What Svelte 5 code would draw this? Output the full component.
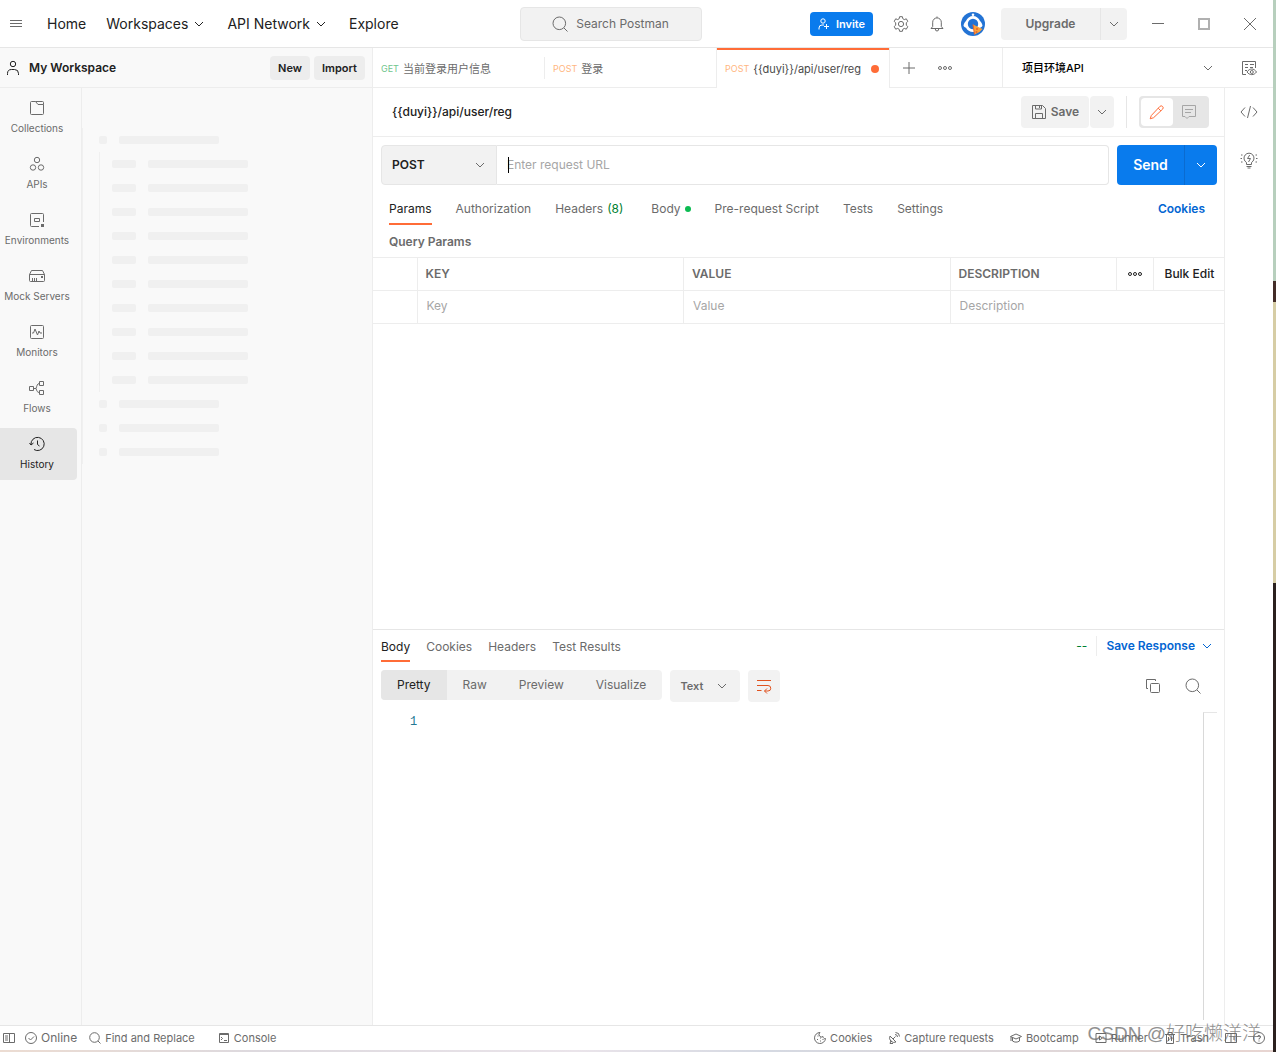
<script>
  const requestUrl = '{{duyi}}/api/user/reg';

  const sections = ['Collections', 'APIs', 'Environments', 'Mock Servers', 'Monitors', 'Flows', 'History'];
  const requestTabs = [
    { label: 'Params' },
    { label: 'Authorization' },
    { label: 'Headers', count: '(8)' },
    { label: 'Body', dot: true },
    { label: 'Pre-request Script' },
    { label: 'Tests' },
    { label: 'Settings' }
  ];
  const responseTabs = ['Body', 'Cookies', 'Headers', 'Test Results'];
  const views = ['Pretty', 'Raw', 'Preview', 'Visualize'];
  const nested = Array.from({ length: 10 });
  const trailing = Array.from({ length: 3 });

  let section = 'History';
  let requestTab = 'Params';
  let responseTab = 'Body';
  let view = 'Pretty';
  let url = '';
</script>

<div class="app">
  <header>
    <nav class="main-nav">
      <button class="menu" aria-label="Menu">
        <svg width="12" height="9" viewBox="0 0 12 9"><path d="M0 1.500h12M0 4.500h12M0 7.500h12" /></svg>
      </button>
      <a href="#home">Home</a>
      <a href="#workspaces">Workspaces
        <svg class="chevron" viewBox="0 0 16 16"><path d="M4 6l4 4 4-4" /></svg>
      </a>
      <a href="#network">API Network
        <svg class="chevron" viewBox="0 0 16 16"><path d="M4 6l4 4 4-4" /></svg>
      </a>
      <a href="#explore">Explore</a>
    </nav>

    <button class="search">
      <svg width="16" height="16" viewBox="0 0 16 16"><circle cx="7.3" cy="7.3" r="6.3" /><path d="M12 12l3.5 3.5" /></svg>
      Search Postman
    </button>

    <div class="account">
      <button class="invite">
        <svg width="12" height="12" viewBox="0 0 12 12"><circle cx="5" cy="3" r="2.2" /><path d="M1 11.5V10a3 3 0 0 1 3-3h2M8.5 6v5M6 8.5h5" /></svg>
        Invite
      </button>
      <button class="plain" aria-label="Settings">
        <svg width="16" height="16" viewBox="0 0 16 16"><circle cx="8" cy="8" r="2.6" /><path d="M6.6 .7h2.8l.4 2 1.5.9 2-.8 1.5 2.6-1.5 1.4v2.4l1.5 1.4-1.5 2.6-2-.8-1.5.9-.4 2H6.6l-.4-2-1.5-.9-2 .8-1.5-2.6 1.5-1.4V6.8L1.2 5.4l1.5-2.6 2 .8 1.5-.9z" /></svg>
      </button>
      <button class="plain bell" aria-label="Notifications">
        <svg width="16" height="16" viewBox="0 0 16 16"><path d="M8 .5v1.3M3.7 10.5V6.200a4.300 4.300 0 0 1 8.600 0v4.300l1.700 2H2zM6.300 13a1.700 2 0 0 0 3.400 0" /></svg>
      </button>
      <button class="plain" aria-label="Profile">
        <svg class="avatar" width="24" height="24" viewBox="0 0 24 24">
          <circle cx="12" cy="12" r="12" fill="#2373d4" />
          <path d="M2.500 13.500C3 11 4 10 5 9c1-3 4-5 7-5s6 2 7 5c1 1 2 2 2.500 4.500-.5 1.500-1.500 2-2.500 2.300-1 2.700-4 4.200-7 4.200s-6-1.500-7-4.200c-1-.3-2-.8-2.500-2.300z" fill="#fff" />
          <circle cx="12" cy="12" r="5.200" fill="#2373d4" />
          <circle cx="12" cy="2.700" r="1.300" fill="#fff" />
          <path d="M12 12.500l9.500 4.500-3 3-5 2.500z" fill="#f9a23b" />
          <path d="M12 12.500l1.500 10" stroke="#e8642c" />
          <circle cx="16" cy="17" r="1" fill="#e8642c" />
          <circle cx="15.500" cy="20" r="1" fill="#e8642c" />
        </svg>
      </button>
      <div class="upgrade">
        <button>Upgrade</button>
        <button class="more" aria-label="Upgrade options">
          <svg class="chevron" viewBox="0 0 16 16"><path d="M4 6l4 4 4-4" /></svg>
        </button>
      </div>
      <div class="window-controls">
        <button aria-label="Minimize"><svg width="12" height="12" viewBox="0 0 12 12"><path d="M0 5.500h12" /></svg></button>
        <button class="maximize" aria-label="Maximize"><svg width="12" height="12" viewBox="0 0 12 12"><path d="M1 1h10v10H1z" stroke-width="2" /></svg></button>
        <button aria-label="Close"><svg width="12" height="12" viewBox="0 0 12 12"><path d="M0 0l12 12M12 0L0 12" /></svg></button>
      </div>
    </div>
  </header>

  <div class="content">
    <aside>
      <div class="workspace">
        <svg width="14" height="16" viewBox="0 0 14 16"><circle cx="7" cy="4" r="2.700" /><path d="M1.500 15v-1.500A4 4 0 0 1 5.500 9.500h3a4 4 0 0 1 4 4V15" /></svg>
        <h1>My Workspace</h1>
        <button>New</button>
        <button>Import</button>
      </div>
      <div class="explorer">
        <nav class="sections">
          {#each sections as name}
            <button class:active={section === name} on:click={() => (section = name)}>
              <svg width="16" height="16" viewBox="0 0 16 16">
                {#if name === 'Collections'}
                  <path d="M1.500 2.500a1 1 0 0 1 1-1h4l2.500 3h5.500v9a1 1 0 0 1-1 1h-11a1 1 0 0 1-1-1zM6.500 1.500h7a1 1 0 0 1 1 1v2" />
                {:else if name === 'APIs'}
                  <circle cx="8" cy="4" r="2.700" /><circle cx="4" cy="11.500" r="2.700" /><circle cx="12" cy="11.500" r="2.700" />
                {:else if name === 'Environments'}
                  <path d="M10 14.500H2.500a1 1 0 0 1-1-1v-11a1 1 0 0 1 1-1h11a1 1 0 0 1 1 1V10M5.500 6.500h5v3h-5z" /><path class="solid" d="M12 12h3v3h-3z" />
                {:else if name === 'Mock Servers'}
                  <path d="M.500 6.500h15v6a1 1 0 0 1-1 1h-13a1 1 0 0 1-1-1zM.500 6.500l2-4h11l2 4M3.500 10v3M5.500 10v3M7.500 10v3" /><path class="solid" d="M12 8h2v2h-2z" />
                {:else if name === 'Monitors'}
                  <rect x="1.500" y="1.500" width="13" height="13" rx="1" /><path d="M3 9h1.500L6 5l2.500 6L10 7l1 2h2" />
                {:else if name === 'Flows'}
                  <path d="M.500 6.500h4v4h-4zM10.500 1.500h4v4h-4zM10.500 10.500h4v4h-4zM4.500 8.500H7M10.500 3.500C8 3.500 8 6 7 8.500c1 2.500 1 4 3.500 4" />
                {:else}
                  <path d="M2 8.500a6.600 6.600 0 1 1 3 5M.500 7L2 9l2.500-2M8.500 4.500v4l2 1.500" />
                {/if}
              </svg>
              {name}
            </button>
          {/each}
        </nav>
        <div class="skeleton" aria-hidden="true">
          <div class="row"><i class="dot"></i><i class="bar"></i></div>
          <div class="nested">
            {#each nested as _}
              <div class="row"><i class="tag"></i><i class="bar"></i></div>
            {/each}
          </div>
          {#each trailing as _}
            <div class="row"><i class="dot"></i><i class="bar"></i></div>
          {/each}
        </div>
      </div>
    </aside>

    <div class="workbench">
      <div class="tab-bar">
        <button class="tab divided"><span class="get">GET</span>当前登录用户信息</button>
        <button class="tab"><span class="post">POST</span>登录</button>
        <button class="tab open"><span class="post">POST</span>{requestUrl}<i class="unsaved"></i></button>
        <div class="tab-tools">
          <button class="plain" aria-label="New tab"><svg width="12" height="12" viewBox="0 0 12 12"><path d="M6 0v12M0 6h12" /></svg></button>
          <button class="plain" aria-label="Tab options">
            <svg width="14" height="6" viewBox="0 0 14 6"><circle cx="2" cy="3" r="1.500" /><circle cx="7" cy="3" r="1.500" /><circle cx="12" cy="3" r="1.500" /></svg>
          </button>
        </div>
        <div class="picker environment">
          <select aria-label="Environment"><option>项目环境API</option></select>
          <svg class="chevron" viewBox="0 0 16 16"><path d="M4 6l4 4 4-4" /></svg>
        </div>
        <button class="plain quick-look" aria-label="Environment quick look">
          <svg width="16" height="16" viewBox="0 0 16 16"><path d="M5 14.500H1.500v-13h13V8M4 4.500h3M4 7.500h3M4 10.500h2M9 4.500h4M9 7.500h3M6 12c2.500-4 7-4 9.500 0-2.500 3.500-7 3.500-9.500 0z" /><circle cx="10.800" cy="12" r="1.500" /></svg>
        </button>
      </div>

      <div class="columns">
        <main>
          <div class="request-title">
            <h2>{requestUrl}</h2>
            <div class="save">
              <button>
                <svg width="16" height="16" viewBox="0 0 16 16"><path d="M1.500 1.500h10l3 3v10h-13zM4.500 1.500v3.500h6V1.500M8.500 2v2M4.500 14.500v-5h7v5" /></svg>
                Save
              </button>
              <button class="more" aria-label="Save options">
                <svg class="chevron" viewBox="0 0 16 16"><path d="M4 6l4 4 4-4" /></svg>
              </button>
            </div>
            <div class="mode">
              <button class="on" aria-label="Build">
                <svg width="16" height="16" viewBox="0 0 16 16"><path d="M1.200 14.800L2.300 11.500 10.800 2.500a1.900 1.900 0 0 1 2.800 2.700L4.600 13.700zM9.200 4.200l2.700 2.700" /></svg>
              </button>
              <button aria-label="Comments">
                <svg width="16" height="16" viewBox="0 0 16 16"><path d="M1.500 1.500h13v11H8l-2 2-2-2H1.500zM4 5.500h8M4 8.500h6" /></svg>
              </button>
            </div>
          </div>

          <div class="request-line">
            <div class="picker method">
              <select aria-label="Method"><option>POST</option></select>
              <svg class="chevron" viewBox="0 0 16 16"><path d="M4 6l4 4 4-4" /></svg>
            </div>
            <div class="url">
              <i class="caret"></i>
              <input type="text" aria-label="Request URL" placeholder="Enter request URL" bind:value={url} />
            </div>
            <div class="send">
              <button>Send</button>
              <button class="more" aria-label="Send options">
                <svg class="chevron" viewBox="0 0 16 16"><path d="M4 6l4 4 4-4" /></svg>
              </button>
            </div>
          </div>

          <div class="request-tabs">
            {#each requestTabs as tab}
              <button class="link-tab" class:active={requestTab === tab.label} on:click={() => (requestTab = tab.label)}>
                {tab.label}
                {#if tab.count}<span class="count">{tab.count}</span>{/if}
                {#if tab.dot}<i class="has-body"></i>{/if}
              </button>
            {/each}
            <a class="blue" href="#cookies">Cookies</a>
          </div>

          <h3>Query Params</h3>
          <table>
            <thead>
              <tr>
                <th class="check"></th>
                <th>KEY</th>
                <th>VALUE</th>
                <th class="description">DESCRIPTION</th>
                <th class="options">
                  <button class="plain" aria-label="Columns">
                    <svg width="14" height="6" viewBox="0 0 14 6"><circle cx="2" cy="3" r="1.500" /><circle cx="7" cy="3" r="1.500" /><circle cx="12" cy="3" r="1.500" /></svg>
                  </button>
                </th>
                <th class="bulk"><button class="plain">Bulk Edit</button></th>
              </tr>
            </thead>
            <tbody>
              <tr>
                <td></td>
                <td><input type="text" aria-label="Key" placeholder="Key" /></td>
                <td><input type="text" aria-label="Value" placeholder="Value" /></td>
                <td colspan="3"><input type="text" aria-label="Description" placeholder="Description" /></td>
              </tr>
            </tbody>
          </table>

          <section class="response">
            <div class="response-tabs">
              {#each responseTabs as name}
                <button class="link-tab" class:active={responseTab === name} on:click={() => (responseTab = name)}>{name}</button>
              {/each}
              <span class="status">--</span>
              <button class="blue save-response">
                Save Response
                <svg class="chevron" viewBox="0 0 16 16"><path d="M4 6l4 4 4-4" /></svg>
              </button>
            </div>
            <div class="toolbar">
              <div class="views">
                {#each views as name}
                  <button class:active={view === name} on:click={() => (view = name)}>{name}</button>
                {/each}
              </div>
              <div class="picker format">
                <select aria-label="Format"><option>Text</option></select>
                <svg class="chevron" viewBox="0 0 16 16"><path d="M4 6l4 4 4-4" /></svg>
              </div>
              <button class="wrap" aria-label="Wrap lines">
                <svg width="16" height="16" viewBox="0 0 16 16"><path d="M1 2.500h14M1 7.500h11a2.700 2.700 0 0 1 0 5.500H8.500M1 12.500h4.500M11 10.500L8.500 13l2.500 2.500" /></svg>
              </button>
              <div class="result-tools">
                <button class="plain" aria-label="Copy">
                  <svg width="16" height="16" viewBox="0 0 16 16"><path d="M3 10.500H1.500v-9h9V3" /><rect x="5.500" y="5.500" width="9" height="9" rx="1" /></svg>
                </button>
                <button class="plain" aria-label="Search response">
                  <svg width="16" height="16" viewBox="0 0 16 16"><circle cx="7.300" cy="7.300" r="6.300" /><path d="M12 12l3.500 3.500" /></svg>
                </button>
              </div>
            </div>
            <div class="editor">
              <code>1</code>
              <div class="ruler"></div>
            </div>
          </section>
        </main>

        <div class="rail">
          <button class="plain" aria-label="Code">
            <svg width="18" height="16" viewBox="0 0 18 16"><path d="M5 3.500L1 8l4 4.500M13 3.500L17 8l-4 4.500M10.500 2l-3 12" /></svg>
          </button>
          <button class="plain" aria-label="Tips">
            <svg width="18" height="18" viewBox="0 0 18 18"><path d="M6.500 13.500v-2A5 5 0 1 1 11.500 11.500v2zM6.500 15.500h5M7.500 17h3M9.700 4L7.500 7.500h3L8.500 11M1 4h1.500M.500 7.500h1.500M1 11h1.500M17 4h-1.500M17.500 7.500H16M17 11h-1.500" /></svg>
          </button>
        </div>
      </div>
    </div>
  </div>

  <footer>
    <button aria-label="Toggle sidebar"><svg width="12" height="12" viewBox="0 0 12 12"><path d="M.500 1.500h11v9H.500zM6.500 1.500v9M2 4h3M2 6h3M2 8h3" /></svg></button>
    <button class="online"><svg width="12" height="12" viewBox="0 0 12 12"><circle cx="6" cy="6" r="5.500" /><path d="M3.500 6l2 2 3.500-3.500" /></svg>Online</button>
    <button class="find"><svg width="12" height="12" viewBox="0 0 12 12"><circle cx="5.500" cy="5.500" r="4.800" /><path d="M9 9l2.500 2.500" /></svg>Find and Replace</button>
    <button><svg width="12" height="12" viewBox="0 0 12 12"><path d="M1.500 1.500h9v9h-9zM1.500 2.500h9M3 5l1.500 1.500L3 8M6 8.500h3" /></svg>Console</button>
    <div class="footer-tools">
      <button><svg width="12" height="12" viewBox="0 0 12 12"><path d="M6 .500A5.500 5.500 0 1 0 11.500 6.500 2 2 0 0 1 9 4.500 2.500 2.500 0 0 1 6 .500zM3.500 4h1M3 7.500h1M6 6h1M6 9h1M8.500 7.500h1" /></svg>Cookies</button>
      <button><svg width="12" height="12" viewBox="0 0 12 12"><path d="M2 4a4.500 4.500 0 0 0 6 6zM5 7l2.500-2.500M7 2.500A2.500 2.500 0 0 1 9.500 5M7.500.500a4 4 0 0 1 4 4M3 8.500l-1 3h3" /></svg>Capture requests</button>
      <button><svg width="12" height="12" viewBox="0 0 12 12"><path d="M.500 4.500L6 2l5.500 2.500L6 7zM2.500 5.500v3.500c2 1.500 5 1.500 7 0V5.500M1 5v4" /></svg>Bootcamp</button>
      <button><svg width="12" height="12" viewBox="0 0 12 12"><path d="M1 1.500h10v9H1zM4.500 4v4l3-2z" /></svg>Runner</button>
      <button><svg width="12" height="12" viewBox="0 0 12 12"><path d="M1 2.500h10M4 2.500V.500h4v2M2.500 2.500v9h7v-9M4.500 5v4M7.500 5v4" /></svg>Trash</button>
      <button aria-label="Two pane view"><svg width="12" height="12" viewBox="0 0 12 12"><path d="M.500 1.500h11v9H.500zM6 1.500v9M8 5h2M8 7h2" /></svg></button>
      <button aria-label="Help"><svg width="12" height="12" viewBox="0 0 12 12"><circle cx="6" cy="6" r="5.500" /><path d="M4.500 4.800a1.500 1.500 0 1 1 1.500 1.700v1M6 8.500v1" /></svg></button>
    </div>
    <span class="watermark">CSDN @好吃懒洋洋</span>
  </footer>
</div>

<style>
  :global(body) {
    font-family: Inter, "Noto Sans CJK SC", sans-serif;
    font-size: 12px;
    line-height: 16px;
    color: #212121;
  }

  .app {
    box-sizing: border-box;
    min-height: 100vh;
    display: flex;
    flex-direction: column;
    /* desktop showing past the window's right and bottom edges */
    padding: 0 3px 2px 0;
    background:
      linear-gradient(#b7cfbd 0 281px, #432c28 281px 302px, #d6cda5 302px 583px, #2b211f 583px) right / 3px 100% no-repeat,
      linear-gradient(90deg, #ecdcd2, #ddd9de 20%, #eae4ea 45%, #d5d9e2 60%, #e8d5d1);
  }

  *, *::before {
    box-sizing: border-box;
  }

  button, select, input {
    font: inherit;
    color: inherit;
    border: 0;
    padding: 0;
    margin: 0;
    background: none;
  }

  input {
    outline: none;
    min-width: 0;
    width: 100%;
  }

  input::placeholder {
    color: #a6a6a6;
    opacity: 1;
  }

  a {
    color: inherit;
    text-decoration: none;
  }

  h1, h2, h3 {
    margin: 0;
    font-size: 12px;
    font-weight: 600;
  }

  svg {
    display: block;
    flex: none;
    fill: none;
    stroke: currentColor;
  }

  .avatar {
    stroke: none;
  }

  .solid {
    fill: currentColor;
    stroke: none;
  }

  .chevron {
    width: 16px;
    height: 16px;
  }

  .plain {
    display: grid;
    place-items: center;
    color: #6b6b6b;
  }

  header {
    height: 48px;
    display: grid;
    grid-template-columns: 10fr 182px 11fr;
    align-items: center;
    background: #fff;
    border-bottom: 1px solid #e6e6e6;
  }

  .main-nav {
    display: flex;
    align-items: center;
    gap: 20px;
    padding-left: 10px;
    font-size: 14px;
    line-height: 20px;
    white-space: nowrap;
  }

  .main-nav a {
    display: flex;
    align-items: center;
    gap: 3px;
  }

  .menu {
    margin-right: 5px;
    color: #6b6b6b;
  }

  .search {
    height: 34px;
    display: flex;
    align-items: center;
    justify-content: center;
    gap: 8px;
    color: #6b6b6b;
    background: #f2f2f2;
    border: 1px solid #e6e6e6;
    border-radius: 4px;
  }

  .account {
    display: flex;
    align-items: center;
    justify-content: flex-end;
    gap: 16px;
  }

  .invite {
    width: 63px;
    height: 24px;
    margin-right: 4px;
    display: flex;
    align-items: center;
    justify-content: center;
    gap: 6px;
    font-size: 11px;
    font-weight: 600;
    color: #fff;
    background: #097bed;
    border-radius: 4px;
  }

  .bell {
    margin-left: 4px;
  }

  .upgrade {
    height: 32px;
    display: flex;
    color: #6b6b6b;
    font-weight: 600;
    background: #f2f2f2;
    border-radius: 4px;
  }

  .upgrade button {
    width: 99px;
  }

  .upgrade .more {
    width: 27px;
    display: grid;
    place-items: center;
    border-left: 1px solid #e6e6e6;
  }

  .window-controls {
    display: flex;
    margin-left: -8px;
    color: #6b6b6b;
  }

  .window-controls button {
    width: 46px;
    height: 32px;
    display: grid;
    place-items: center;
  }

  .window-controls .maximize {
    color: #b0b0b0;
  }

  .content {
    flex: 1;
    display: flex;
    background: #fff;
  }

  aside {
    width: 373px;
    flex: none;
    display: flex;
    flex-direction: column;
    background: #f9f9f9;
    border-right: 1px solid #ededed;
  }

  .workspace {
    height: 40px;
    display: flex;
    align-items: center;
    gap: 4px;
    padding: 0 7px 0 6px;
    border-bottom: 1px solid #ededed;
  }

  .workspace h1 {
    flex: 1;
    padding-left: 5px;
  }

  .workspace button {
    height: 24px;
    padding: 0 8px;
    font-size: 11px;
    font-weight: 600;
    background: #ededed;
    border-radius: 4px;
  }

  .explorer {
    flex: 1;
    display: flex;
  }

  .sections {
    width: 82px;
    display: flex;
    flex-direction: column;
    gap: 4px;
    padding: 4px 4px 0 0;
    border-right: 1px solid #ededed;
  }

  .sections button {
    height: 52px;
    display: flex;
    flex-direction: column;
    align-items: center;
    gap: 4px;
    padding: 8px 3px 0 0;
    font-size: 10px;
    color: #6b6b6b;
    white-space: nowrap;
    border-radius: 0 4px 4px 0;
  }

  .sections .active {
    color: #212121;
    background: #e6e6e6;
  }

  .skeleton {
    align-self: flex-start;
    margin-top: 40px;
    padding-left: 16px;
    border-left: 1px solid #f0f0f0;
  }

  .skeleton i {
    height: 8px;
    background: #f0f0f0;
    border-radius: 2px;
  }

  .row {
    height: 24px;
    display: flex;
    align-items: center;
    gap: 12px;
  }

  .nested {
    padding-left: 12px;
    border-left: 1px solid #f0f0f0;
  }

  .skeleton .dot {
    width: 8px;
  }

  .skeleton .tag {
    width: 24px;
  }

  .skeleton .bar {
    width: 100px;
  }

  .workbench {
    flex: 1;
    min-width: 0;
    display: flex;
    flex-direction: column;
  }

  .tab-bar {
    height: 40px;
    display: flex;
  }

  .tab {
    position: relative;
    width: 172px;
    display: flex;
    align-items: center;
    gap: 4px;
    padding: 2px 8px 0;
    font-size: 11px;
    color: #6b6b6b;
    border-bottom: 1px solid #ededed;
    white-space: nowrap;
  }

  .tab span {
    font-size: 9px;
  }

  .divided::before {
    content: "";
    position: absolute;
    right: 0;
    top: 9px;
    height: 22px;
    border-right: 1px solid #ededed;
  }

  .get {
    color: #6fc58d;
  }

  .post {
    color: #ffb681;
  }

  .open {
    padding-top: 0;
    color: #4a4a4a;
    border-top: 2px solid #ff6c37;
    border-bottom: 0;
    box-shadow: -1px 0 #ededed, 1px 0 #ededed;
  }

  .unsaved {
    width: 8px;
    height: 8px;
    margin: 0 2px 0 auto;
    background: #ff6c37;
    border-radius: 50%;
  }

  .tab-tools {
    flex: 1;
    display: flex;
    align-items: center;
    gap: 23px;
    padding-left: 14px;
    border-bottom: 1px solid #ededed;
  }

  .picker {
    position: relative;
    display: flex;
    align-items: center;
  }

  .picker select {
    width: 100%;
    height: 100%;
    appearance: none;
    outline: none;
  }

  .picker .chevron {
    position: absolute;
    right: 8px;
    color: #6b6b6b;
    pointer-events: none;
  }

  .environment {
    width: 222px;
    font-size: 11px;
    font-weight: 500;
    color: #000;
    border-left: 1px solid #ededed;
    border-bottom: 1px solid #ededed;
  }

  .environment select {
    padding-left: 19px;
  }

  .quick-look {
    width: 49px;
    border-bottom: 1px solid #ededed;
  }

  .columns {
    flex: 1;
    display: flex;
  }

  main {
    flex: 1;
    min-width: 0;
    display: flex;
    flex-direction: column;
  }

  .rail {
    width: 49px;
    display: flex;
    flex-direction: column;
    align-items: center;
    gap: 31px;
    padding-top: 16px;
    border-left: 1px solid #ededed;
  }

  .request-title {
    height: 49px;
    display: flex;
    align-items: center;
    padding: 0 15px 0 19px;
    border-bottom: 1px solid #ededed;
  }

  .request-title h2 {
    flex: 1;
    font-weight: 500;
  }

  .save {
    display: flex;
    gap: 1px;
    padding-right: 12px;
    border-right: 1px solid #e6e6e6;
    color: #6b6b6b;
    font-weight: 600;
  }

  .save button {
    width: 68px;
    height: 32px;
    display: flex;
    align-items: center;
    justify-content: center;
    gap: 4px;
    background: #f2f2f2;
    border-radius: 4px;
  }

  .save .more {
    width: 24px;
  }

  .mode {
    display: flex;
    margin-left: 12px;
    padding: 2px 4px 2px 2px;
    background: #e6e6e6;
    border-radius: 4px;
  }

  .mode button {
    width: 32px;
    height: 28px;
    display: grid;
    place-items: center;
    color: #a6a6a6;
    border-radius: 4px;
  }

  .mode .on {
    color: #ff6c37;
    background: #fff;
  }

  .request-line {
    height: 40px;
    display: flex;
    margin: 8px 7px 0 8px;
  }

  .method {
    width: 116px;
    font-weight: 600;
    background: #f2f2f2;
    border: 1px solid #e6e6e6;
    border-radius: 4px 0 0 4px;
  }

  .method select {
    padding-left: 10px;
  }

  .url {
    flex: 1;
    position: relative;
    display: flex;
    padding-left: 10px;
    border: 1px solid #e6e6e6;
    border-left: 0;
    border-radius: 0 4px 4px 0;
  }

  .caret {
    position: absolute;
    left: 11px;
    top: 11px;
    height: 16px;
    border-left: 1px solid #000;
  }

  .send {
    display: flex;
    margin-left: 8px;
    font-size: 14px;
    font-weight: 600;
    color: #fff;
    background: #097bed;
    border-radius: 4px;
  }

  .send button {
    width: 67px;
  }

  .send .more {
    width: 33px;
    display: grid;
    place-items: center;
    border-left: 1px solid #0a6bd0;
  }

  .request-tabs {
    height: 40px;
    display: flex;
    gap: 24px;
    padding: 0 19px 0 16px;
  }

  .link-tab {
    height: 40px;
    display: flex;
    align-items: center;
    gap: 4px;
    padding-top: 10px;
    color: #6b6b6b;
    border-bottom: 2px solid transparent;
    white-space: nowrap;
  }

  .link-tab.active {
    color: #212121;
    border-color: #ff6c37;
  }

  .count {
    margin-right: 4px;
    color: #007f31;
  }

  .has-body {
    width: 6px;
    height: 6px;
    background: #0cbb52;
    border-radius: 50%;
  }

  .blue {
    color: #0265d2;
    font-weight: 600;
  }

  .request-tabs .blue {
    margin-left: auto;
    padding-top: 16px;
  }

  h3 {
    padding: 9px 16px 7px;
    color: #6b6b6b;
  }

  table {
    width: 100%;
    table-layout: fixed;
    border-collapse: collapse;
    color: #6b6b6b;
  }

  th, td {
    height: 33px;
    padding: 0 0 0 8px;
    text-align: left;
    font-weight: 600;
    border: 1px solid #ededed;
    border-width: 1px 0 1px 1px;
  }

  th:first-child, td:first-child {
    border-left: 0;
  }

  td {
    padding: 0 0 2px 9px;
    font-weight: 400;
  }

  .check {
    width: 44px;
  }

  .description {
    width: 166px;
  }

  .options {
    width: 37px;
    padding: 0;
  }

  .options button {
    width: 100%;
    color: #212121;
  }

  .bulk {
    width: 71px;
    padding-left: 11px;
  }

  .bulk button {
    color: #212121;
    font-weight: 500;
    white-space: nowrap;
  }

  .response {
    height: 396px;
    margin-top: auto;
    display: flex;
    flex-direction: column;
    border-top: 1px solid #e6e6e6;
  }

  .response-tabs {
    display: flex;
    gap: 16px;
    padding: 0 9px 0 8px;
  }

  .response-tabs .link-tab {
    height: 32px;
    padding-top: 4px;
  }

  .status {
    margin-left: auto;
    padding-top: 8px;
    color: #007f31;
  }

  .save-response {
    height: 20px;
    display: flex;
    align-items: center;
    gap: 4px;
    margin: 6px 0 0 -7px;
    padding-left: 9px;
    border-left: 1px solid #ededed;
  }

  .toolbar {
    display: flex;
    align-items: flex-start;
    gap: 8px;
    padding: 8px 23px 0 8px;
  }

  .views {
    display: flex;
    background: #f2f2f2;
    border-radius: 4px;
    color: #6b6b6b;
  }

  .views button {
    height: 30px;
    padding: 0 16px;
  }

  .views .active {
    color: #212121;
    background: #e6e6e6;
    border-radius: 4px 0 0 4px;
  }

  .format {
    width: 70px;
    height: 32px;
    font-size: 11px;
    font-weight: 600;
    color: #6b6b6b;
    background: #f2f2f2;
    border-radius: 4px;
  }

  .format select {
    padding-left: 10px;
  }

  .format .chevron {
    right: 10px;
  }

  .wrap {
    width: 32px;
    height: 32px;
    display: grid;
    place-items: center;
    color: #e05320;
    background: #f2f2f2;
    border-radius: 4px;
  }

  .result-tools {
    height: 32px;
    display: flex;
    gap: 24px;
    margin-left: auto;
  }

  .editor {
    flex: 1;
    display: flex;
    justify-content: space-between;
    padding: 10px 7px 5px 37px;
  }

  code {
    font-family: "Liberation Mono", monospace;
    line-height: 20px;
    color: #237893;
  }

  .ruler {
    width: 14px;
    border-top: 1px solid #e6e6e6;
    border-left: 1px solid #d9d9d9;
  }

  footer {
    position: relative;
    height: 25px;
    display: flex;
    align-items: center;
    padding: 0 8px 0 3px;
    color: #6b6b6b;
    font-size: 11px;
    background: #fff;
    border-top: 1px solid #e6e6e6;
  }

  footer button {
    display: flex;
    align-items: center;
    gap: 4px;
    white-space: nowrap;
  }

  .online {
    margin: 0 12px 0 10px;
    font-size: 12px;
  }

  .find {
    margin-right: 23px;
  }

  .footer-tools {
    flex: 1;
    display: flex;
    justify-content: flex-end;
    gap: 16px;
  }

  .watermark {
    position: absolute;
    right: 12px;
    bottom: 4px;
    font-family: "Liberation Sans", "Noto Sans CJK SC", sans-serif;
    font-size: 19px;
    font-weight: 300;
    line-height: 24px;
    color: #6b6b6b;
    opacity: 0.75;
    pointer-events: none;
  }
</style>
